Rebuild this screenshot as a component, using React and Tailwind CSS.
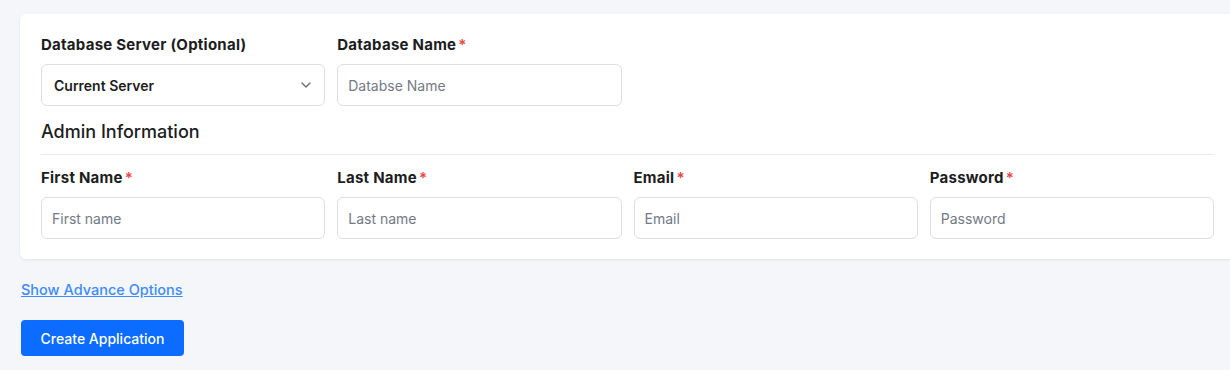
import React, { useState } from 'react';

const font = { fontFamily: '"Inter", "Noto Sans", sans-serif' };

function Label({ children, required }) {
  return (
    <label className="block text-[15px] leading-[22px] font-bold text-[#1c1d21] mb-[8px] tracking-[0.25px]">
      {children}
      {required && <span className="text-[#ef4444] ml-[2px] font-semibold">*</span>}
    </label>
  );
}

function Field({ label, placeholder, required, type = 'text' }) {
  return (
    <div>
      <Label required={required}>{label}</Label>
      <input
        type={type}
        placeholder={placeholder}
        className="w-full h-[42px] rounded-md border border-[#d9dee8] bg-white px-[10px] text-[14px] text-[#1c1d21] placeholder:text-[#737a86] outline-none"
      />
    </div>
  );
}

export default function App() {
  const [server, setServer] = useState('current');

  return (
    <div className="min-h-screen bg-[#f5f6fa] pt-[14px] pl-[20px] overflow-hidden" style={font}>
      <div className="w-[1215px] bg-white rounded-md shadow-[0_1px_3px_rgba(0,0,0,0.08)] px-[21px] pt-[20px] pb-[20px]">
        <div className="grid grid-cols-4 gap-x-[12px]">
          <div>
            <Label>Database Server (Optional)</Label>
            <div className="relative">
              <select
                value={server}
                onChange={e => setServer(e.target.value)}
                className="w-full h-[42px] appearance-none rounded-md border border-[#d9dee8] bg-white pl-[12px] pr-8 text-[14px] font-semibold text-[#1c1d21] outline-none"
              >
                <option value="current">Current Server</option>
              </select>
              <svg className="absolute right-[13px] top-[16px] pointer-events-none" width="12" height="10" viewBox="0 0 12 10" fill="none">
                <path d="M2 3l4 4 4-4" stroke="#6b7280" strokeWidth="1.5" strokeLinecap="round" strokeLinejoin="round" />
              </svg>
            </div>
          </div>
          <Field label="Database Name" placeholder="Databse Name" required />
        </div>

        <h3 className="mt-[13px] text-[18px] leading-[26px] font-medium text-[#1c1d21] pb-[9px] border-b border-[#e8eaee]">
          Admin Information
        </h3>

        <div className="grid grid-cols-4 gap-x-[12px] mt-[12px]">
          <Field label="First Name" placeholder="First name" required />
          <Field label="Last Name" placeholder="Last name" required />
          <Field label="Email" placeholder="Email" type="email" required />
          <Field label="Password" placeholder="Password" type="password" required />
        </div>
      </div>

      <a href="#" className="inline-block mt-[21px] ml-[1px] text-[14.5px] leading-5 font-medium text-[#3d8bfd] underline">
        Show Advance Options
      </a>

      <div className="mt-[19px] ml-[1px]">
        <button className="h-[36px] w-[163px] rounded-[4px] bg-[#0b6cff] text-white text-[14px] font-medium">
          Create Application
        </button>
      </div>
    </div>
  );
}
